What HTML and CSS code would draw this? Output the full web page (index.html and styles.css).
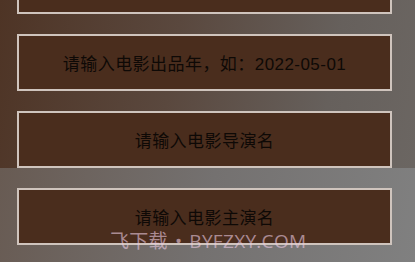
FILE: index.html
```html
<!DOCTYPE html>
<html lang="zh">
<head>
  <meta charset="UTF-8">
  <title>添加电影</title>
  <link rel="stylesheet" href="styles.css">
</head>
<body>
  <div class="form-list">
    <div class="field"></div>
    <div class="field">请输入电影出品年，如：2022-05-01</div>
    <div class="field">请输入电影导演名</div>
    <div class="field">请输入电影主演名</div>
  </div>

  <div class="watermark">飞下载<span class="dot">•</span>BYFZXY.COM</div>
</body>
</html>
```

FILE: styles.css
```css
html, body {
  margin: 0;
  height: 100%;
  overflow: hidden;
}

body {
  font-family: "Liberation Sans", "Noto Sans CJK SC", sans-serif;
  position: relative;
  background:
    linear-gradient(100deg, #685b53 0%, #747170 50%, #808080 100%) left bottom / 100% 94px no-repeat,
    linear-gradient(100deg, #4e3425 0%, #5a483e 40%, #66605c 75%, #6c6763 100%);
}

.form-list {
  display: flex;
  flex-direction: column;
  gap: 20px;
  width: 375px;
  margin: -43px 0 0 17px;
}

.field {
  box-sizing: border-box;
  height: 57px;
  background-color: #4a2d1d; /* dark brown input */
  border: 2px solid #cfc4bd;
  color: #0e0906;
  font-size: 17px;
  letter-spacing: 0.45px;
  display: flex;
  align-items: center;
  justify-content: center;
}

.watermark {
  position: absolute;
  left: 110px;
  top: 226px;
  font-family: "Open Sans", "Noto Sans CJK SC", sans-serif;
  font-size: 19px;
  letter-spacing: 0.3px;
  color: rgba(236, 204, 226, 0.6);
  white-space: nowrap;
}

.dot {
  margin: 0 7px;
}
```
